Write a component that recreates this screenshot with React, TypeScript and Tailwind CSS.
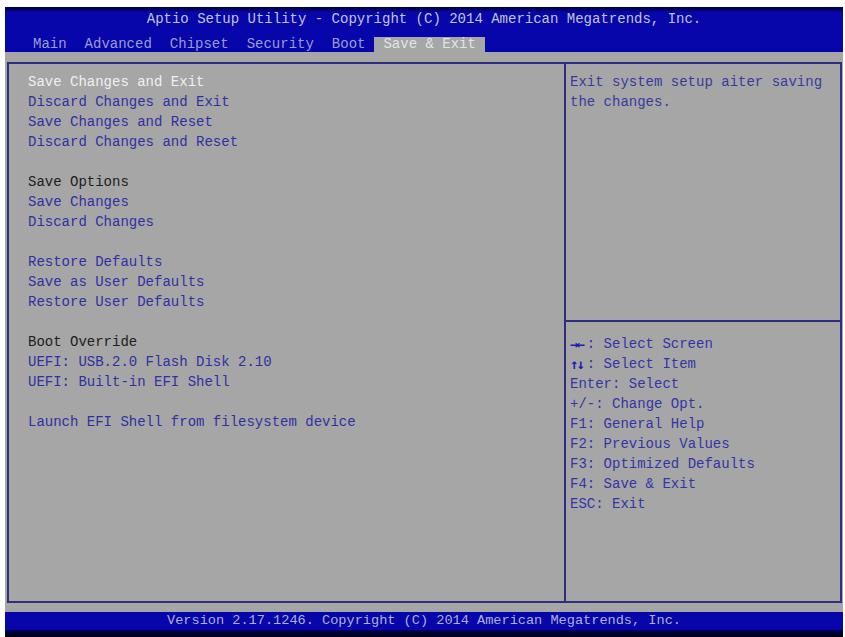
const mono = { fontFamily: '"Liberation Mono", "DejaVu Sans Mono", monospace' };
const arrows = { fontFamily: '"DejaVu Sans Mono", monospace' };

const tabs = ["Main", "Advanced", "Chipset", "Security", "Boot", "Save & Exit"];

type Row = { text: string; kind: "sel" | "link" | "label" | "gap" };

const rows: Row[] = [
  { text: "Save Changes and Exit", kind: "sel" },
  { text: "Discard Changes and Exit", kind: "link" },
  { text: "Save Changes and Reset", kind: "link" },
  { text: "Discard Changes and Reset", kind: "link" },
  { text: "", kind: "gap" },
  { text: "Save Options", kind: "label" },
  { text: "Save Changes", kind: "link" },
  { text: "Discard Changes", kind: "link" },
  { text: "", kind: "gap" },
  { text: "Restore Defaults", kind: "link" },
  { text: "Save as User Defaults", kind: "link" },
  { text: "Restore User Defaults", kind: "link" },
  { text: "", kind: "gap" },
  { text: "Boot Override", kind: "label" },
  { text: "UEFI: USB.2.0 Flash Disk 2.10", kind: "link" },
  { text: "UEFI: Built-in EFI Shell", kind: "link" },
  { text: "", kind: "gap" },
  { text: "Launch EFI Shell from filesystem device", kind: "link" },
];

// key, rest, is arrow glyph
const help: [string, string, boolean][] = [
  ["→←", ": Select Screen", true],
  ["↑↓", ": Select Item", true],
  ["Enter", ": Select", false],
  ["+/-", ": Change Opt.", false],
  ["F1", ": General Help", false],
  ["F2", ": Previous Values", false],
  ["F3", ": Optimized Defaults", false],
  ["F4", ": Save & Exit", false],
  ["ESC", ": Exit", false],
];

const rowColor = {
  sel: "text-[#f0f0f0]",
  link: "text-[#3030a2]",
  label: "text-[#202020]",
  gap: "",
};

export default function App() {
  return (
    <div className="w-[845px] h-[637px] bg-white pt-[7px] pl-[5px] overflow-hidden" style={mono}>
      <div className="w-[838px] h-[630px] flex flex-col bg-[#a6a6a6] text-[14px]">
        {/* header */}
        <div className="h-[45px] flex flex-col bg-gradient-to-b from-[#000038] from-0% to-[#0606aa] to-[12%]">
          <div className="h-[22px] leading-[22px] mt-[1px] text-center text-[#c4c4d4]">
            Aptio Setup Utility - Copyright (C) 2014 American Megatrends, Inc.
          </div>
          <div className="flex mt-[7px] pl-[19px] h-[15px] leading-[15px]">
            {tabs.map((t, i) =>
              i === tabs.length - 1 ? (
                <div key={t} className="px-[9px] bg-[#a6a6a6] text-[#e4e4e4] whitespace-pre">
                  {t}
                </div>
              ) : (
                <div key={t} className="px-[9px] text-[#9c9cd4] whitespace-pre">
                  {t}
                </div>
              )
            )}
          </div>
        </div>

        {/* frame */}
        <div className="mt-[10px] ml-[2px] mr-[1px] h-[541px] flex border-2 border-[#2e2e7c]">
          <div className="flex-1 pt-[8px] pl-[19px]">
            {rows.map((r, i) => (
              <div key={i} className={`h-[20px] leading-[20px] whitespace-pre ${rowColor[r.kind]}`}>
                {r.text}
              </div>
            ))}
          </div>
          <div className="w-[276px] flex flex-col border-l-2 border-[#2e2e7c]">
            <div className="h-[258px] pt-[8px] pl-[4px] border-b-2 border-[#2e2e7c] text-[#3a3a9c] leading-[20px]">
              <div>Exit system setup aiter saving</div>
              <div>the changes.</div>
            </div>
            <div className="pt-[12px] pl-[4px]">
              {help.map(([k, v, arrow]) => (
                <div key={k} className="flex h-[20px] leading-[20px] whitespace-pre text-[#3434a6]">
                  {arrow ? (
                    <span style={arrows} className="block w-[16.8px] h-[20px] leading-[20px] font-bold text-[#1c1cb4] tracking-[-2px]">
                      {k}
                    </span>
                  ) : (
                    <span>{k}</span>
                  )}
                  <span>{v}</span>
                </div>
              ))}
            </div>
          </div>
        </div>

        {/* footer */}
        <div className="mt-[9px] h-[18px] leading-[18px] bg-[#0606aa] text-center text-[#b0b0d8] text-[13.6px]">
          Version 2.17.1246. Copyright (C) 2014 American Megatrends, Inc.
        </div>
        <div className="flex-1 bg-gradient-to-b from-[#00005a] to-[#000010]" />
      </div>
    </div>
  );
}
